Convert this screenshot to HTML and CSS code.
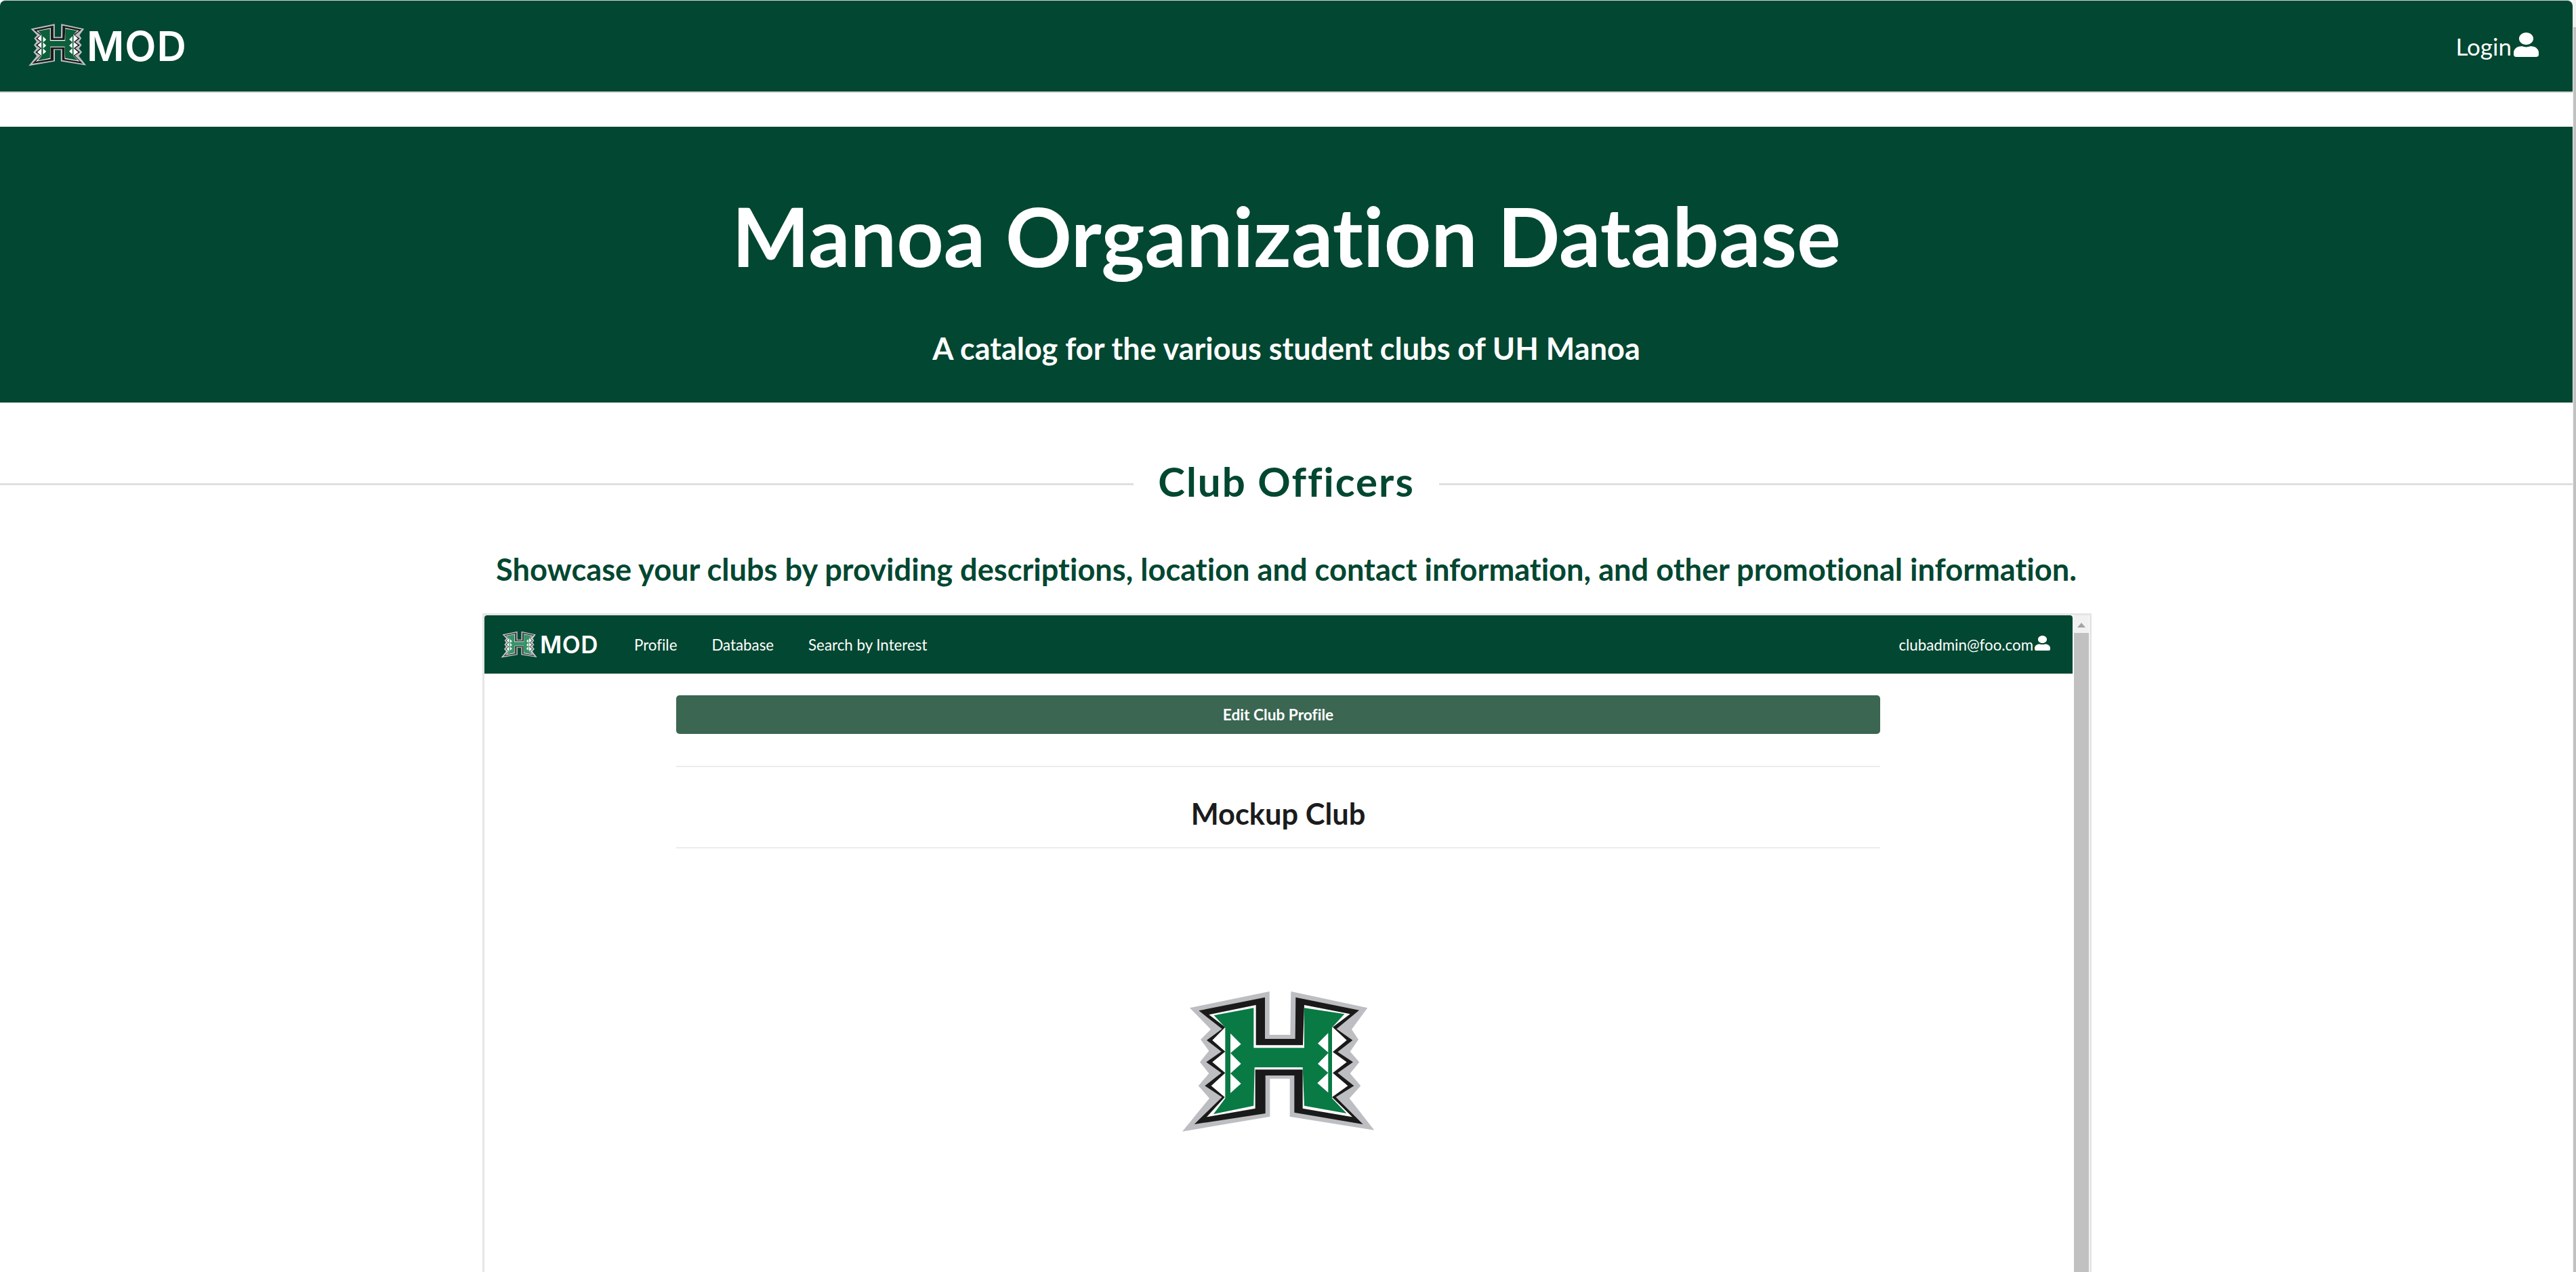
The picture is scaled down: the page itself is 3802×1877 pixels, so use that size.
FILE: index.html
```html
<!DOCTYPE html>
<html lang="en">
<head>
	<meta charset="UTF-8">
	<title>Manoa Organization Database</title>
	<link rel="stylesheet" href="styles.css">
</head>
<body>
	<svg class="defs" width="0" height="0">
		<symbol id="hLogo" viewBox="0 0 960 780">
			<polygon fill="#bcbec2" points="105,145 458,72 458,264 550,264 553,72 892,145 822,240 852,285 815,338 856,385 815,435 862,490 812,545 922,686 548,626 548,458 460,458 460,626 72,692 192,545 143,490 190,435 150,385 190,335 153,285 198,240"/>
			<polygon fill="#1a1a1a" points="145,157 438,98 438,282 572,282 574,98 855,155 755,238 826,288 760,340 828,385 760,433 832,490 752,540 872,660 568,608 568,444 440,444 440,612 125,660 248,540 172,490 245,433 178,385 245,338 180,288 248,238"/>
			<polygon fill="#fff" points="190,175 398,132 398,310 606,310 612,132 815,172 738,230 800,288 738,340 800,385 738,433 805,490 735,540 825,628 605,590 605,418 395,418 395,590 180,628 260,540 200,490 262,433 205,385 262,338 205,288 262,230"/>
			<polygon class="hGreen" points="212,178 388,145 388,322 612,322 612,145 790,172 735,232 735,545 800,612 612,578 605,408 392,408 388,578 210,615 262,545 262,232"/>
			<polygon fill="#fff" points="285,258 332,305 285,345"/>
			<polygon fill="#fff" points="285,345 332,392 285,435"/>
			<polygon fill="#fff" points="285,435 332,480 285,522"/>
			<polygon fill="#fff" points="718,256 672,302 718,342"/>
			<polygon fill="#fff" points="718,345 672,392 718,432"/>
			<polygon fill="#fff" points="718,432 670,478 718,520"/>
		</symbol>
		<symbol id="userIcon" viewBox="0 0 448 512" preserveAspectRatio="none">
			<path fill="currentColor" d="M224 256c70.7 0 128-57.3 128-128S294.7 0 224 0 96 57.3 96 128s57.3 128 128 128zm89.6 32h-16.7c-22.2 10.2-46.9 16-72.9 16s-50.6-5.8-72.9-16h-16.7C60.2 288 0 348.2 0 422.4V464c0 26.5 21.5 48 48 48h352c26.5 0 48-21.5 48-48v-41.6c0-74.2-60.2-134.4-134.4-134.4z"/>
		</symbol>
	</svg>

	<div class="page">
		<div class="nav">
			<div class="brand">
				<svg class="brandLogo"><use href="#hLogo"/></svg>
				<span class="brandText">MOD</span>
			</div>
			<div class="login">
				<span>Login</span>
				<svg class="loginIcon"><use href="#userIcon"/></svg>
			</div>
		</div>

		<div class="hero">
			<h1>Manoa Organization Database</h1>
			<h2>A catalog for the various student clubs of UH Manoa</h2>
		</div>

		<div class="divider">
			<span>Club Officers</span>
		</div>
		<p class="blurb">Showcase your clubs by providing descriptions, location and contact information, and other promotional information.</p>

		<div class="frame">
			<div class="frameBody">
				<div class="innerNav">
					<div class="innerBrand">
						<svg class="innerLogo"><use href="#hLogo"/></svg>
						<span class="innerBrandText">MOD</span>
					</div>
					<a>Profile</a>
					<a>Database</a>
					<a>Search by Interest</a>
					<div class="innerUser">
						<span>clubadmin@foo.com</span>
						<svg class="innerUserIcon"><use href="#userIcon"/></svg>
					</div>
				</div>
				<div class="clubPage">
					<div class="editBtn">Edit Club Profile</div>
					<div class="clubName">Mockup Club</div>
					<svg class="clubLogo"><use href="#hLogo"/></svg>
				</div>
			</div>
			<div class="frameScroll">
				<div class="arrow"></div>
				<div class="thumb"></div>
			</div>
		</div>
	</div>

	<div class="pageScroll">
		<div class="pageThumb"></div>
	</div>
</body>
</html>
```

FILE: styles.css
```css
html, body { margin: 0; height: 100%; overflow: hidden; }
body { display: flex; font-family: Lato, "Liberation Sans", sans-serif; font-variant-ligatures: none; background: #fff; }
a { display: block; }
.defs { display: block; height: 0; }
.hGreen { fill: var(--hGreen, #0a7a45); }

.page { width: 3797px; }

.pageScroll { width: 5px; background: #f1f1f1; padding-top: 40px; }
.pageThumb { height: 100%; background: #c1c1c1; margin-left: 1px; }

.nav {
	height: 134px;
	background: #024731;
	border-top: 1px solid #cfd3d1;
	border-bottom: 2px solid #d4d4d5;
	border-radius: 8px 8px 0 0;
	display: flex;
	justify-content: space-between;
	align-items: center;
	color: #fff;
}
.brand { display: flex; align-items: center; margin-left: 35px; }
.brandLogo { --hGreen: #0b5f3a; width: 96px; height: 78px; margin-top: -2px; }
.brandText { font-family: Inter, sans-serif; font-size: 60px; font-weight: 600; letter-spacing: 1px; margin-left: -3px; }
.login { display: flex; align-items: center; font-size: 35px; margin-right: 50px; }
.loginIcon { width: 37px; height: 36px; margin-left: 3px; margin-top: -4px; }

.hero {
	margin-top: 50px;
	height: 407px;
	background: #024731;
	color: #fff;
	text-align: center;
	box-sizing: border-box;
	padding-top: 94px;
}
.hero h1 { margin: 0; font-size: 121.3px; line-height: 132px; font-weight: 700; }
.hero h2 { margin: 73px 0 0; font-size: 45px; line-height: 56px; font-weight: 700; }

.divider {
	margin-top: 79px;
	display: flex;
	align-items: center;
	color: #024731;
	font-size: 60px;
	font-weight: 700;
	letter-spacing: 2px;
}
.divider::before, .divider::after {
	content: "";
	flex: 1;
	height: 3px;
	background: #dfdfdf;
	margin-top: 9px;
}
.divider span { padding: 0 36px; line-height: 74px; }

.blurb {
	margin: 65px 0 0;
	text-align: center;
	color: #024731;
	font-size: 45.2px;
	line-height: 56px;
	font-weight: 700;
}

.frame {
	width: 2375px;
	height: 1000px;
	margin: 37px 0 0 712px;
	box-sizing: border-box;
	border: 3px solid #e5e5e5;
	display: flex;
	background: #fff;
}
.frameBody { width: 2344px; }
.frameScroll { width: 22px; margin-left: 2px; background: #f1f1f1; }
.arrow {
	width: 0;
	margin: 11px auto 0;
	border-left: 6px solid transparent;
	border-right: 6px solid transparent;
	border-bottom: 7px solid #a3a3a3;
}
.thumb { height: 100%; margin-top: 8px; background: #c1c1c1; }

.innerNav {
	height: 86px;
	background: #024731;
	border-radius: 4px 4px 0 0;
	display: flex;
	align-items: center;
	color: #fff;
	font-size: 22.3px;
}
.innerBrand { display: flex; align-items: center; margin-left: 20px; margin-right: 53px; }
.innerLogo { width: 60px; height: 49px; filter: contrast(.7) brightness(1.2); }
.innerBrandText { font-family: Inter, sans-serif; font-size: 35px; font-weight: 600; letter-spacing: .5px; margin-left: 2px; }
.innerNav a { margin-right: 51px; }
.innerUser { display: flex; align-items: center; margin-left: auto; margin-right: 33px; }
.innerUserIcon { width: 23px; height: 22px; margin-left: 2px; margin-top: -4px; }

.clubPage { width: 1777px; margin: 32px 0 0 283px; }
.editBtn {
	height: 57px;
	line-height: 57px;
	background: #3b6651;
	border-radius: 5px;
	color: #fff;
	text-align: center;
	font-size: 22.7px;
	font-weight: 700;
}
.clubName {
	margin-top: 47px;
	height: 100px;
	padding-top: 18px;
	line-height: 100px;
	border-top: 2px solid #ececec;
	border-bottom: 2px solid #ececec;
	text-align: center;
	font-size: 43.4px;
	font-weight: 700;
	color: #1b1c1d;
}
.clubLogo { display: block; width: 320px; height: 260px; margin: 187px 0 0 723px; }
```
